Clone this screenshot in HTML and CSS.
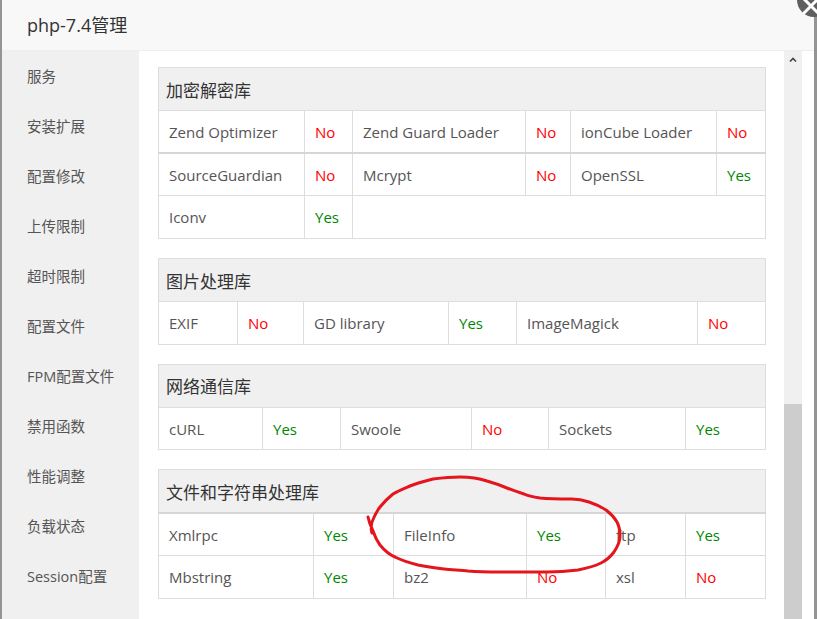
FILE: index.html
```html
<!doctype html>
<html>

<head>
	<meta charset=utf-8>
	<title>php-7.4管理</title>
	<meta name=viewport content="width=device-width, initial-scale=1">
	<link rel="stylesheet" href="styles.css">
</head>

<body>
	<div class="layer">
		<div class="layer-title">php-7.4管理</div>
		<div class="layer-body">
			<ul class="side-menu">
				<li>服务</li>
				<li>安装扩展</li>
				<li>配置修改</li>
				<li>上传限制</li>
				<li>超时限制</li>
				<li>配置文件</li>
				<li>FPM配置文件</li>
				<li>禁用函数</li>
				<li>性能调整</li>
				<li>负载状态</li>
				<li>Session配置</li>
			</ul>

			<div class="content">
				<table class="lib crypto">
					<colgroup><col><col><col><col><col><col></colgroup>
					<thead>
						<tr><th colspan="6">加密解密库</th></tr>
					</thead>
					<tbody>
						<tr class="split">
							<td>Zend Optimizer</td><td class="no">No</td>
							<td>Zend Guard Loader</td><td class="no">No</td>
							<td>ionCube Loader</td><td class="no">No</td>
						</tr>
						<tr>
							<td>SourceGuardian</td><td class="no">No</td>
							<td>Mcrypt</td><td class="no">No</td>
							<td>OpenSSL</td><td class="yes">Yes</td>
						</tr>
						<tr>
							<td>Iconv</td><td class="yes">Yes</td>
							<td colspan="4"></td>
						</tr>
					</tbody>
				</table>

				<table class="lib image">
					<colgroup><col><col><col><col><col><col></colgroup>
					<thead>
						<tr><th colspan="6">图片处理库</th></tr>
					</thead>
					<tbody>
						<tr>
							<td>EXIF</td><td class="no">No</td>
							<td>GD library</td><td class="yes">Yes</td>
							<td>ImageMagick</td><td class="no">No</td>
						</tr>
					</tbody>
				</table>

				<table class="lib net">
					<colgroup><col><col><col><col><col><col></colgroup>
					<thead>
						<tr><th colspan="6">网络通信库</th></tr>
					</thead>
					<tbody>
						<tr>
							<td>cURL</td><td class="yes">Yes</td>
							<td>Swoole</td><td class="no">No</td>
							<td>Sockets</td><td class="yes">Yes</td>
						</tr>
					</tbody>
				</table>

				<table class="lib file">
					<colgroup><col><col><col><col><col><col></colgroup>
					<thead>
						<tr class="split"><th colspan="6">文件和字符串处理库</th></tr>
					</thead>
					<tbody>
						<tr>
							<td>Xmlrpc</td><td class="yes">Yes</td>
							<td>FileInfo</td><td class="yes">Yes</td>
							<td>ftp</td><td class="yes">Yes</td>
						</tr>
						<tr>
							<td>Mbstring</td><td class="yes">Yes</td>
							<td>bz2</td><td class="no">No</td>
							<td>xsl</td><td class="no">No</td>
						</tr>
					</tbody>
				</table>
			</div>

			<div class="scrollbar">
				<svg class="arrow" width="8" height="5" viewBox="0 0 8 5"><polyline points="1,4.5 4,1.5 7,4.5" fill="none" stroke="#444" stroke-width="1.6"/></svg>
				<div class="thumb"></div>
			</div>
		</div>
	</div>

	<a class="close-btn">
		<svg width="34" height="34" viewBox="0 0 34 34"><path d="M10 10 L24 24 M24 10 L10 24" stroke="#fff" stroke-width="3" stroke-linecap="round"/></svg>
	</a>

	<!-- hand drawn mark -->
	<svg class="mark" width="817" height="619" viewBox="0 0 817 619">
		<path d="M368 517 C369 522 371 527 373 531 C375 537 377 541 380 545 C385 551 390 555 395 557 C403 561 410 563 418 565 C428 567 436 568 444 569 C452 570 460 570 468 571 C480 572 490 572 500 572 C515 572 530 572 547 572 C560 572 570 571 578 570 C588 568 595 566 601 563 C607 560 611 556 614 552 C618 546 620 541 620 536 C620 530 619 526 617 522 C614 517 610 513 606 510 C600 506 595 504 589 502 C583 500 578 499 572 499 C562 499 550 499 540 498 C533 497 528 496 524 494 C518 492 512 490 507 488 C500 485 494 483 487 481 C478 478 470 477 460 477 C450 477 441 478 433 479 C425 481 417 483 410 486 C403 489 398 491 393 494 C388 498 384 502 380 507 C376 512 374 517 372 522 C371 526 371 530 372 533" fill="none" stroke="#e4151c" stroke-width="3" stroke-linecap="round"/>
	</svg>
</body>
</html>
```

FILE: styles.css
```css
html, body{
	margin: 0; padding: 0;
	width: 100%;
	height: 100%;
	overflow: hidden;
	background-color: #949494;
	font-family: "Open Sans", "Noto Sans CJK SC", sans-serif;
}

*, *:after, *:before{
	box-sizing: border-box;
}

.layer{
	margin-left: 2px;
	width: 812px;
	height: 100%;
	background-color: #fff;
	display: flex;
	flex-direction: column;
}

.layer-title{
	height: 51px;
	line-height: 50px;
	padding-left: 25px;
	background-color: #f8f8f8;
	border-bottom: 1px solid #eee;
	font-size: 18px;
	color: #333;
}

.layer-body{
	flex: 1;
	display: flex;
	min-height: 0;
}

.side-menu{
	width: 137px;
	margin: 0;
	padding: 1px 0 0 0;
	list-style: none;
	background-color: #f0f0f0;
}

.side-menu li{
	height: 50px;
	line-height: 50px;
	padding-left: 25px;
	font-size: 14.5px;
	color: #555;
}

.content{
	width: 645px;
	padding: 16px 19px 0 19px;
}

.scrollbar{
	width: 18px;
	background-color: #f0f0f0;
	display: flex;
	flex-direction: column;
	align-items: center;
}

.scrollbar .arrow{
	margin-top: 6px;
}

.scrollbar .thumb{
	margin-top: 342px;
	flex: 1;
	width: 100%;
	background-color: #cdcdcd;
}

table.lib{
	width: 607px;
	table-layout: fixed;
	border-collapse: collapse;
	margin-bottom: 19px;
	font-size: 15px;
	color: #555;
}

table.lib th,
table.lib td{
	height: 42.7px;
	padding: 0 0 0 10px;
	border: 1px solid #ddd;
	text-align: left;
	white-space: nowrap;
}

table.lib th{
	height: 43px;
	padding-left: 7px;
	background-color: #f0f0f0;
	font-weight: normal;
	font-size: 17px;
	color: #333;
}

table.lib tr.split td,
table.lib tr.split th{
	border-bottom: 2px solid #d6d6d6;
}

table.lib td.no{
	color: #f00;
}

table.lib td.yes{
	color: #080;
}

/* column widths per table */
.crypto col:nth-child(1){ width: 146px; }
.crypto col:nth-child(2){ width: 48px; }
.crypto col:nth-child(3){ width: 173px; }
.crypto col:nth-child(4){ width: 45px; }
.crypto col:nth-child(5){ width: 146px; }
.crypto col:nth-child(6){ width: 49px; }

.image col:nth-child(1){ width: 79px; }
.image col:nth-child(2){ width: 66px; }
.image col:nth-child(3){ width: 145px; }
.image col:nth-child(4){ width: 68px; }
.image col:nth-child(5){ width: 181px; }
.image col:nth-child(6){ width: 68px; }

.net col:nth-child(1){ width: 104px; }
.net col:nth-child(2){ width: 78px; }
.net col:nth-child(3){ width: 131px; }
.net col:nth-child(4){ width: 77px; }
.net col:nth-child(5){ width: 137px; }
.net col:nth-child(6){ width: 80px; }

.file col:nth-child(1){ width: 155px; }
.file col:nth-child(2){ width: 80px; }
.file col:nth-child(3){ width: 133px; }
.file col:nth-child(4){ width: 79px; }
.file col:nth-child(5){ width: 80px; }
.file col:nth-child(6){ width: 80px; }

.close-btn{
	position: absolute;
	left: 797px;
	top: -17px;
	width: 34px;
	height: 34px;
	border-radius: 50%;
	background-color: #5f5f5f;
	display: flex;
}

.close-btn svg{
	margin-top: 6px;
	margin-left: -3px;
}

.mark{
	position: absolute;
	left: 0;
	top: 0;
	pointer-events: none;
}
```
